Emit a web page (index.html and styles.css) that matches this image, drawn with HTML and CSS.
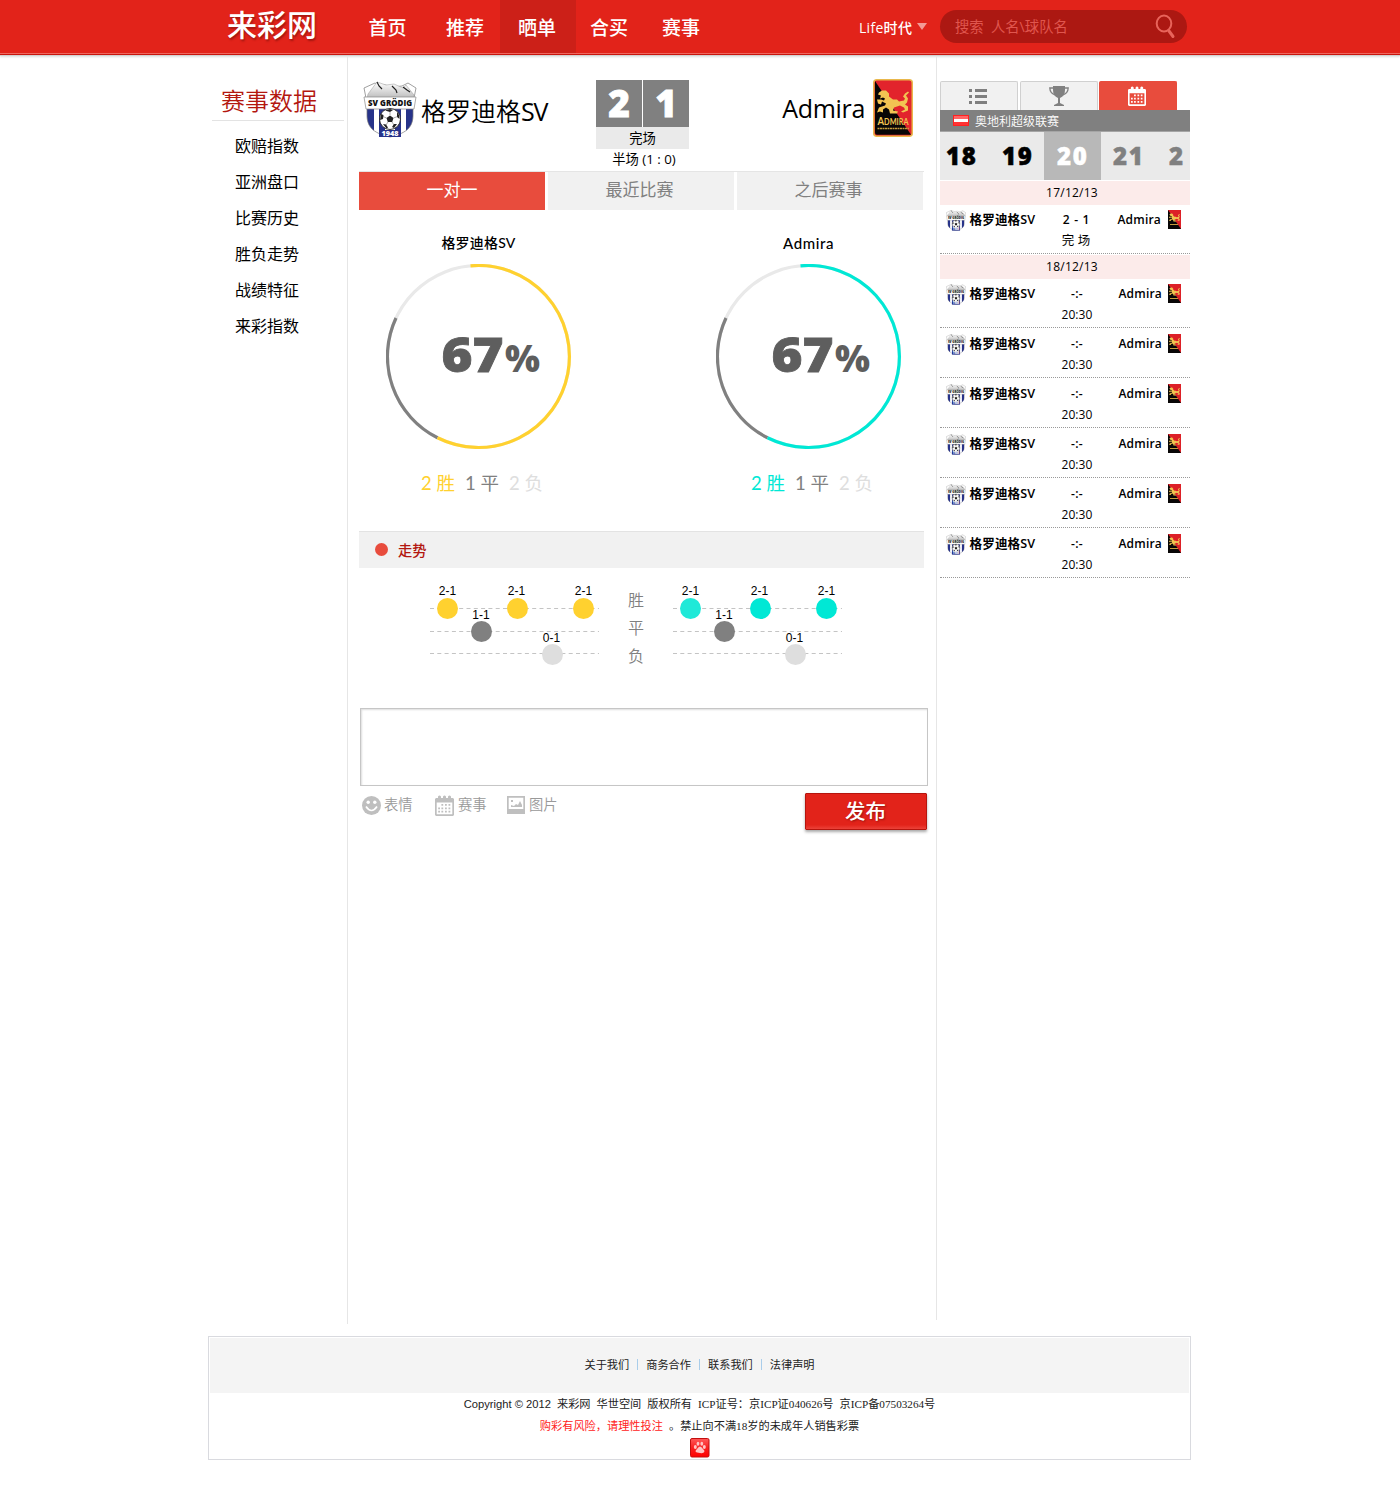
FILE: index.html
```html
<!DOCTYPE html>
<html lang="zh-CN">
<head>
<meta charset="utf-8">
<title>来彩网</title>
<link rel="stylesheet" href="styles.css">
</head>
<body>
<svg class="sprites" width="0" height="0" aria-hidden="true">
  <defs>
    <linearGradient id="rock" x1="0" y1="0" x2="0" y2="1"><stop offset="0" stop-color="#fff"/><stop offset="1" stop-color="#bdbdbd"/></linearGradient>
    <clipPath id="shield"><path d="M4 26H50V34C50 45 45 52 27 56C9 52 4 45 4 34Z"/></clipPath>
    <symbol id="crest-home" viewBox="0 0 54 57">
      <path d="M3 17L1 7L12 2L15 4L22 4L30 6L39 5L45 2L53 7L51 17Z" fill="#fff" stroke="#777" stroke-width=".7"/>
      <path d="M4 17L5 13L14 1L23 4L31 3L40 7L43 4L51 14L50 17Z" fill="url(#rock)" stroke="#999" stroke-width=".5"/>
      <path d="M14 1l2 4 3 3M29 5l4 4 1 3M40 6l4 3 3 2" fill="none" stroke="#222" stroke-width="1.200"/>
      <g clip-path="url(#shield)"><path d="M0 26H54V57H0Z" fill="#fff"/><path d="M4 26h7v31H4zM16 26h6v31h-6zM32 26h6v31h-6zM43 26h7v31h-7z" fill="#27338a"/></g>
      <path d="M4 26H50V34C50 45 45 52 27 56C9 52 4 45 4 34Z" fill="none" stroke="#777" stroke-width=".7"/>
      <path d="M1 16H53L51 28H3Z" fill="#fff" stroke="#888" stroke-width=".7"/>
      <text x="27" y="25" text-anchor="middle" textLength="44" lengthAdjust="spacingAndGlyphs" class="crest-word">SV GRÖDIG</text>
      <circle cx="27" cy="38" r="10.500" fill="#fff" stroke="#222" stroke-width=".9"/>
      <path d="M27 34.500l3.500 2.600-1.300 4h-4.400l-1.300-4zM22 29.500l5-1.500 3 1-3 2zM34 31l2 3 .5 4-2.500-2zM18 33l2.500 1-.5 4-3 1zM34 43l-3 4-2-1 2-3zM20 43l3 .5 2 3-1.500 1z" fill="#222"/>
      <path d="M27 34v-3M30.500 37l4-1.500M23.500 37l-3.500-1.500M29 41l2 3M25 41l-2 3" stroke="#555" stroke-width=".5"/>
      <path d="M16 49H38V56H16Z" fill="#27338a"/>
      <text x="27" y="55.300" text-anchor="middle" textLength="17" lengthAdjust="spacingAndGlyphs" class="crest-year">1948</text>
    </symbol>
    <symbol id="lion" viewBox="0 0 32 25">
      <path d="M2 3L5 1L9 1L12 4L12 7L16 10L20 10L22 12L27 11L28 9L26 7L28 4L31 2L32 3L29 6L31 9L30 13L28 15L31 17L31 21L26 23L24 22L28 20L27 18L23 16L17 18L16 21L21 22L20 24L13 24L12 20L9 18L6 20L6 23L3 22L0 23L2 18L8 16L9 14L5 12L4 15L1 14L0 10L4 10L7 11L8 9L6 8L3 9L4 6L1 5Z"/>
    </symbol>
    <symbol id="crest-away" viewBox="0 0 40 58">
      <rect x=".75" y=".75" width="38.500" height="56.500" rx="3" fill="#e2242c" stroke="#e9b84c" stroke-width="1.500"/>
      <path d="M2 2L38 55.800H4Q2 55.800 2 53Z" fill="#080606"/>
      <use href="#lion" x="4" y="10" width="32" height="26" fill="#f2c452"/>
      <text x="20" y="46" text-anchor="middle" textLength="31" lengthAdjust="spacingAndGlyphs" class="crest-admira">A<tspan class="crest-caps">DMIRA</tspan></text>
      <path d="M4.500 49.500H36" stroke="#c59c3c" stroke-width="1.500" stroke-dasharray="2 .5"/>
    </symbol>
    <symbol id="crest-away-small" viewBox="0 0 13 19">
      <path d="M0 0H13V19H0Z" fill="#dd2027"/><path d="M0 0L13 19H0Z" fill="#080606"/>
      <use href="#lion" x="1" y="3" width="11" height="9" fill="#f2c452"/><path d="M2 14.500h8" stroke="#c59c3c"/>
    </symbol>
    <symbol id="calendar" viewBox="0 0 19 21">
      <path fill-rule="evenodd" d="M1 3H3V1.500Q4.500-.5 6 1.500V3H8V1.500Q9.500-.5 11 1.500V3H13V1.500Q14.500-.5 16 1.500V3H18L19 4V20L18 21H1L0 20V4ZM1.700 7.500V19.300H17.300V7.500Z"/>
      <path d="M6.400 9h1.800v1.800h-1.800zM10 9h1.800v1.800h-1.800zM13.500 9h1.800v1.800h-1.800zM3.200 12.400h1.800v1.800h-1.800zM6.400 12.400h1.800v1.800h-1.800zM10 12.400h1.800v1.800h-1.800zM13.500 12.400h1.800v1.800h-1.800zM3.200 15.800h1.800v1.800h-1.800zM6.400 15.800h1.800v1.800h-1.800zM10 15.800h1.800v1.800h-1.800zM13.500 15.800h1.800v1.800h-1.800z"/>
    </symbol>
  </defs>
</svg>

<header class="topbar">
  <div class="topbar-inner">
    <a class="logo">来彩网</a>
    <nav class="nav">
      <a class="nav-home">首页</a><a class="nav-tips">推荐</a><a class="nav-show active">晒单</a><a class="nav-pool">合买</a><a class="nav-match">赛事</a>
    </nav>
    <a class="user">Life时代<i class="caret"></i></a>
    <div class="search"><span>搜索&nbsp; 人名\球队名</span>
      <svg width="21" height="26" viewBox="0 0 21 26"><ellipse cx="9" cy="10.500" rx="7.300" ry="8" fill="none" stroke="#e8645b" stroke-width="2"/><path d="M14 18l4 5.500" stroke="#e8645b" stroke-width="3" stroke-linecap="round"/></svg>
    </div>
  </div>
</header>

<div class="page">
  <aside class="side">
    <h2>赛事数据</h2>
    <ul><li>欧赔指数</li><li>亚洲盘口</li><li>比赛历史</li><li>胜负走势</li><li>战绩特征</li><li>来彩指数</li></ul>
  </aside>

  <main class="main">
    <section class="match">
      <svg class="crest-h" width="54" height="57"><use href="#crest-home"/></svg>
      <div class="team-h">格罗迪格<span>SV</span></div>
      <div class="score">
        <div class="goals"><b>2</b><b>1</b></div>
        <div class="state">完场</div>
        <div class="half">半场 (1 : 0)</div>
      </div>
      <div class="team-a">Admira</div>
      <svg class="crest-a" width="40" height="58"><use href="#crest-away"/></svg>
    </section>

    <div class="tabs"><a class="active">一对一</a><a>最近比赛</a><a>之后赛事</a></div>

    <section class="rings">
      <div class="ring home">
        <h3>格罗迪格SV</h3>
        <svg width="186" height="186" viewBox="-92.500 -92.500 186 186">
          <circle r="91" class="arc-lose"/>
          <path d="M-82.500-38.500A91 91 0 0 0-41 81.300" class="arc-draw"/>
          <path d="M-8-90.650A91 91 0 1 1-41 81.300" class="arc-win"/>
          <text x="-37" y="15" textLength="62" lengthAdjust="spacingAndGlyphs" class="pct">67</text>
          <text x="26.500" y="15.500" textLength="35" lengthAdjust="spacingAndGlyphs" class="pct-sign">%</text>
        </svg>
        <p><span class="win">2 胜</span><span class="draw">1 平</span><span class="lose">2 负</span></p>
      </div>
      <div class="ring away">
        <h3>Admira</h3>
        <svg width="186" height="186" viewBox="-92.500 -92.500 186 186">
          <circle r="91" class="arc-lose"/>
          <path d="M-82.500-38.500A91 91 0 0 0-41 81.300" class="arc-draw"/>
          <path d="M-8-90.650A91 91 0 1 1-41 81.300" class="arc-win"/>
          <text x="-37" y="15" textLength="62" lengthAdjust="spacingAndGlyphs" class="pct">67</text>
          <text x="26.500" y="15.500" textLength="35" lengthAdjust="spacingAndGlyphs" class="pct-sign">%</text>
        </svg>
        <p><span class="win">2 胜</span><span class="draw">1 平</span><span class="lose">2 负</span></p>
      </div>
    </section>

    <h2 class="bar"><i></i>走势</h2>
    <section class="trend">
      <svg class="chart home" width="170" height="88">
        <path class="grid" d="M0 28.500H169M0 51.500H169M0 73.500H169"/>
        <g class="win-dot"><circle cx="17.500" cy="28.500" r="10.500"/><circle cx="87.500" cy="28.500" r="10.500"/><circle cx="153.500" cy="28.500" r="10.500"/></g>
        <circle class="draw-dot" cx="51.500" cy="51.500" r="10.500"/><circle class="lose-dot" cx="122.500" cy="74.500" r="10.500"/>
        <text x="17.500" y="15">2-1</text><text x="86.500" y="15">2-1</text><text x="153.500" y="15">2-1</text><text x="51" y="39">1-1</text><text x="121.500" y="62">0-1</text>
      </svg>
      <div class="levels"><span>胜</span><span>平</span><span>负</span></div>
      <svg class="chart away" width="170" height="88">
        <path class="grid" d="M0 28.500H169M0 51.500H169M0 73.500H169"/>
        <g class="win-dot"><circle class="soft" cx="17.500" cy="28.500" r="10.500"/><circle cx="87.500" cy="28.500" r="10.500"/><circle cx="153.500" cy="28.500" r="10.500"/></g>
        <circle class="draw-dot" cx="51.500" cy="51.500" r="10.500"/><circle class="lose-dot" cx="122.500" cy="74.500" r="10.500"/>
        <text x="17.500" y="15">2-1</text><text x="86.500" y="15">2-1</text><text x="153.500" y="15">2-1</text><text x="51" y="39">1-1</text><text x="121.500" y="62">0-1</text>
      </svg>
    </section>

    <section class="post">
      <textarea></textarea>
      <div class="post-bar">
        <span class="tool face"><svg width="19" height="19"><circle cx="9.500" cy="9.500" r="9.500" fill="#bfbfbf"/><circle cx="6.200" cy="6.300" r="1.700" fill="#fff"/><circle cx="12.800" cy="6.300" r="1.700" fill="#fff"/><path d="M4 10.500q5.500 8 11 0" fill="none" stroke="#fff" stroke-width="1.700"/></svg>表情</span>
        <span class="tool game"><svg width="19" height="21" fill="#bfbfbf"><use href="#calendar"/></svg>赛事</span>
        <span class="tool pic"><svg width="18" height="18"><path fill="#bfbfbf" fill-rule="evenodd" d="M0 0H18V18H0ZM1.700 1.700V13H16.300V1.700ZM4 11V9l3 1 2-2 2 1 2-4 2 4v2zM4 4h2v2H4z"/></svg>图片</span>
        <button>发布</button>
      </div>
    </section>
  </main>

  <aside class="fixtures">
    <div class="icon-tabs">
      <a><svg width="18" height="15" fill="#7f7f7f"><path d="M0 0h3v3H0zM0 6h3v3H0zM0 12h3v3H0zM6 0h12v3H6zM6 6h12v3H6zM6 12h12v3H6z"/></svg></a>
      <a class="cup"><svg width="20" height="20" fill="#808080"><path d="M4 0H16V4Q16 10 11 12V17L15 19V20H5V19L9 17V12Q4 10 4 4Z"/><path d="M4 2H.8Q1 7 6 9M16 2h3.200Q19 7 14 9" fill="none" stroke="#808080" stroke-width="1.300"/></svg></a>
      <a class="active"><svg width="18" height="20" fill="#fff"><use href="#calendar"/></svg></a>
    </div>
    <div class="league"><i class="flag"></i>奥地利超级联赛</div>
    <div class="days"><b>18</b><b>19</b><b class="active">20</b><b class="next">21</b><b class="next cut">2</b></div>
    <h4>17/12/13</h4>
    <div class="row played"><svg class="ch" width="20" height="21"><use href="#crest-home"/></svg><b class="h">格罗迪格SV</b><b class="s">2 - 1</b><b class="a">Admira</b><svg class="ca" width="13" height="19"><use href="#crest-away-small"/></svg><span>完 场</span></div>
    <h4>18/12/13</h4>
    <div class="row"><svg class="ch" width="20" height="21"><use href="#crest-home"/></svg><b class="h">格罗迪格SV</b><b class="s">-:-</b><b class="a">Admira</b><svg class="ca" width="13" height="19"><use href="#crest-away-small"/></svg><span>20:30</span></div>
    <div class="row"><svg class="ch" width="20" height="21"><use href="#crest-home"/></svg><b class="h">格罗迪格SV</b><b class="s">-:-</b><b class="a">Admira</b><svg class="ca" width="13" height="19"><use href="#crest-away-small"/></svg><span>20:30</span></div>
    <div class="row"><svg class="ch" width="20" height="21"><use href="#crest-home"/></svg><b class="h">格罗迪格SV</b><b class="s">-:-</b><b class="a">Admira</b><svg class="ca" width="13" height="19"><use href="#crest-away-small"/></svg><span>20:30</span></div>
    <div class="row"><svg class="ch" width="20" height="21"><use href="#crest-home"/></svg><b class="h">格罗迪格SV</b><b class="s">-:-</b><b class="a">Admira</b><svg class="ca" width="13" height="19"><use href="#crest-away-small"/></svg><span>20:30</span></div>
    <div class="row"><svg class="ch" width="20" height="21"><use href="#crest-home"/></svg><b class="h">格罗迪格SV</b><b class="s">-:-</b><b class="a">Admira</b><svg class="ca" width="13" height="19"><use href="#crest-away-small"/></svg><span>20:30</span></div>
    <div class="row"><svg class="ch" width="20" height="21"><use href="#crest-home"/></svg><b class="h">格罗迪格SV</b><b class="s">-:-</b><b class="a">Admira</b><svg class="ca" width="13" height="19"><use href="#crest-away-small"/></svg><span>20:30</span></div>
  </aside>
</div>

<footer class="footer">
  <div class="links"><a>关于我们</a><i></i><a>商务合作</a><i></i><a>联系我们</a><i></i><a>法律声明</a></div>
  <p class="copy"><span class="en">Copyright © 2012</span><span>来彩网</span><span>华世空间</span><span>版权所有</span><span>ICP证号：京ICP证040626号</span><span>京ICP备07503264号</span></p>
  <p class="warn"><em>购彩有风险，请理性投注</em><span>。禁止向不满18岁的未成年人销售彩票</span></p>
  <svg class="paw" width="20" height="20"><defs><linearGradient id="pawbg" x1="0" y1="0" x2="0" y2="1"><stop offset="0" stop-color="#ff5a5a"/><stop offset=".5" stop-color="#fa2020"/><stop offset="1" stop-color="#f00"/></linearGradient></defs><rect x=".5" y=".5" width="18.500" height="18.500" rx="1.500" fill="url(#pawbg)" stroke="#c20f0f"/><g fill="#ffc4c4"><ellipse cx="5.300" cy="9" rx="1.500" ry="2"/><ellipse cx="8" cy="5.700" rx="1.400" ry="2"/><ellipse cx="11.800" cy="5.700" rx="1.400" ry="2"/><ellipse cx="14.300" cy="9" rx="1.500" ry="2"/><path d="M10 8.500q1.500 0 3 2.500 2 1.500 1.300 3-.8 1.500-4.300 1t-4.300-1q-.7-1.500 1.300-3 1.500-2.500 3-2.500"/></g></svg>
</footer>
</body>
</html>
```
FILE: styles.css
```css
* { box-sizing: border-box; }
body { margin: 0; background: #fff; color: #000; font-family: "Open Sans", "Noto Sans CJK SC", sans-serif; }
h2, h3, h4, p, ul { margin: 0; padding: 0; font-weight: 400; }
ul { list-style: none; }
i, em { font-style: normal; }
svg { display: block; flex: none; }
.sprites { position: absolute; }

/* top bar */
.topbar { height: 56px; background: linear-gradient(#e2231a 0 53px, #f0675f 53px 54px, #c9150d 54px 55px, #d2d2d2 55px); box-shadow: 0 1px 2px #ddd; }
.topbar-inner { display: flex; width: 984px; margin-left: 208px; height: 53px; color: #fff; }
.logo { width: 140px; padding-left: 19px; font-size: 30px; font-weight: 500; line-height: 50px; text-shadow: 1px 2px 2px #a31710; }
.nav { display: flex; width: 470px; font-size: 19px; font-weight: 500; line-height: 56px; text-align: center; }
.nav a { flex: none; }
.nav-home { width: 79px; }
.nav-tips { width: 70px; margin-left: 3px; }
.nav-show { width: 76px; padding-right: 2px; }
.nav-pool { width: 66px; }
.nav-match { width: 78px; }
.nav .active { height: 53px; background: #cc2018; }
.user { display: flex; flex: none; align-items: center; width: 122px; padding-left: 41px; font-size: 14px; font-weight: 500; letter-spacing: .3px; white-space: nowrap; }
.caret { margin-left: 5px; border: 5px solid transparent; border-top: 7px solid #f39a95; border-bottom: 0; }
.search { display: flex; flex: none; justify-content: space-between; width: 247px; height: 33px; margin-top: 10px; padding: 3px 11px 0 15px; border-radius: 17px; background: #ac1812; color: #e0564e; font-size: 14.3px; line-height: 28px; }

.page { display: flex; height: 1268px; margin-left: 208px; }

/* sidebar */
.side { width: 140px; border-right: 1px solid #e6e6e6; }
.side h2 { width: 132px; height: 40px; margin: 25px 0 7px 4px; padding-left: 9px; border-bottom: 1px solid #e3e3e3; color: #b3170f; font-size: 24px; font-weight: 350; line-height: 39px; }
.side li { padding-left: 27px; font-size: 16px; line-height: 36px; }

/* match header */
.main { width: 589px; height: 1264px; padding-left: 11px; border-right: 1px solid #e6e6e6; }
.match { display: flex; width: 565px; height: 116px; border-bottom: 1px solid #e5e5e5; }
.crest-h { margin: 25px 4px 0; }
.team-h { width: 175px; padding-top: 38px; font-size: 25px; font-weight: 350; line-height: 34px; white-space: nowrap; }
.team-h span { font-weight: 400; letter-spacing: -1.2px; }
.score { width: 93px; padding-top: 24px; font-size: 13.3px; text-align: center; white-space: nowrap; }
.goals { display: flex; gap: 1px; height: 47px; color: #fff; font: 800 37px/45px "Open Sans", sans-serif; }
.goals b { flex: 1; background: #808080; font-weight: 800; -webkit-text-stroke: .8px; }
.state { height: 22px; background: #eaeaea; line-height: 22px; }
.half { padding-left: 3px; line-height: 20px; }
.team-a { width: 184px; padding: 35px 8px 0 0; font-size: 25px; line-height: 34px; letter-spacing: -.3px; text-align: right; }
.crest-a { margin-top: 23px; }
.crest-word { font: 800 8px "Open Sans", sans-serif; fill: #111; }
.crest-year { font: 800 7px "Open Sans", sans-serif; fill: #fff; }
.crest-admira { font: 700 11px Lato, sans-serif; fill: #f2c452; }
.crest-caps { font-size: 8.5px; }

.tabs { display: flex; gap: 3px; width: 564px; }
.tabs a { flex: none; width: 186px; height: 38px; padding-right: 3px; background: #f1f1f1; color: #808080; font-size: 17px; line-height: 36px; text-align: center; }
.tabs .active { padding: 0; background: #e84c3d; color: #fff; }

/* win rate rings */
.rings { display: flex; gap: 91px; width: 569px; height: 321px; }
.ring { width: 239px; flex: none; padding-top: 21.5px; --c: #ffd12f; }
.away { --c: #00e8d5; }
.ring h3 { height: 32px; font: 500 14px/22px Lato, "Noto Sans CJK SC", sans-serif; text-align: center; letter-spacing: .2px; }
.ring.away h3 { font-size: 15px; letter-spacing: .6px; }
.ring svg { margin: 0 auto 0 26.5px; }
.arc-lose, .arc-draw, .arc-win { fill: none; stroke-width: 3.2; stroke: #e9e9e9; }
.arc-draw { stroke: #808080; }
.arc-win { stroke: var(--c); }
.pct, .pct-sign { font: 800 48px "Open Sans", sans-serif; fill: #5e5e5e; stroke: #5e5e5e; stroke-width: .8; }
.pct-sign { font-size: 37px; stroke-width: 0; }
.ring p { display: flex; gap: 11px; padding: 21px 0 0 62px; font: 18.5px/24px Lato, "Noto Sans CJK SC", sans-serif; white-space: nowrap; }
.ring p span { width: 33px; }
.win { color: var(--c); }
.draw { color: #808080; }
.lose { color: #dedede; }

/* trend */
.bar { display: flex; align-items: center; width: 565px; height: 37px; padding: 0 0 1px 16px; border-top: 1px solid #e3e3e3; background: #f1f1f1; color: #b3170f; font-size: 14.3px; font-weight: 500; }
.bar i { width: 13px; height: 13px; margin-right: 10px; border-radius: 50%; background: #e84c3d; }
.trend { display: flex; height: 140px; padding: 12px 0 0 71px; }
.chart.home { --c: #ffd12f; }
.chart text { font: 12px "Liberation Sans", sans-serif; text-anchor: middle; }
.grid { stroke: #c4c4c4; stroke-width: 1; stroke-dasharray: 4 3.3; }
.win-dot { fill: var(--c); }
.soft { fill: #1fe9d8; }
.draw-dot { fill: #808080; }
.lose-dot { fill: #dedede; }
.levels { width: 73px; padding: 6px 0 0 28px; color: #808080; font-size: 16px; font-weight: 350; line-height: 28px; }
.levels span { display: block; }

/* post box */
.post { width: 568px; margin-left: 1px; }
.post textarea { display: block; width: 568px; height: 78px; resize: none; border: 1px solid #c6c6c6; outline: 0; box-shadow: inset 1px 1px 2px #ddd; }
.post-bar { display: flex; align-items: flex-start; padding-left: 2px; color: #999; font-size: 14.3px; font-weight: 350; line-height: 38px; }
.tool { display: flex; align-items: center; gap: 4px; }
.face { width: 73px; gap: 3px; }
.game { width: 72px; gap: 4px; }
.post button { width: 122px; height: 37px; margin: 7px 1px 0 auto; padding: 0 1px 3px 0; border: 1px solid #b5150e; border-radius: 1px; background: linear-gradient(#e2231a 88%, #ec4239); box-shadow: 0 2px 3px #aaa; color: #fff; font: 500 20.5px/32px "Noto Sans CJK SC", sans-serif; text-shadow: 1px 1px 2px #9b140e; }

/* fixtures */
.fixtures { width: 250px; margin-left: 3px; font-size: 12px; }
.icon-tabs { display: flex; gap: 1.5px; padding-top: 25px; }
.icon-tabs a { display: flex; align-items: center; justify-content: center; width: 78px; height: 29px; padding-right: 2px; border: 1px solid #d0d0d0; border-bottom: 0; border-radius: 2px 2px 0 0; background: #f1f1f1; }
.icon-tabs .cup { padding-right: 0; }
.icon-tabs .active { border-color: #e84c3d; background: #e84c3d; }
.league { display: flex; align-items: center; gap: 6px; height: 22px; padding-left: 13px; background: #808080; border-bottom: 1px solid #a5a5a5; color: #fff; font-weight: 350; }
.flag { width: 16px; height: 11px; border: 1px solid #f22; background: linear-gradient(#f66 3px, #fff 3px 6px, #f33 6px); }
.days { display: flex; height: 48px; background: #eaeaea; font: 800 24px/47px "Open Sans", sans-serif; overflow: hidden; }
.days b { flex: none; width: 56px; height: 48px; padding-left: 6px; font-weight: 800; letter-spacing: 1.6px; -webkit-text-stroke: .5px; }
.days .active { width: 57px; margin-left: -8px; padding-left: 13px; background: #b8b8b8; color: #fff; }
.days .next { color: #808080; padding-left: 12px; }
.days .cut { width: 33px; }
.fixtures h4 { height: 24px; padding-left: 14px; background: #fcebea; font-size: 12px; line-height: 23px; letter-spacing: .25px; text-align: center; }
.days + h4 { margin-top: 1px; }
.row { display: grid; grid-template: 26px 22px / 29px 74px 68px 51px 28px; height: 49px; margin-bottom: 1px; border-bottom: 1px dotted #999; white-space: nowrap; }
.row b { font-weight: 600; line-height: 29px; }
.row .h { padding-left: .5px; font-size: 12.6px; letter-spacing: .1px; }
.row .ch { margin: 5px 0 0 6px; }
.row .s { text-align: center; letter-spacing: .4px; }
.row .a { text-align: right; letter-spacing: .2px; }
.row .ca { margin: 5px 0 0 6px; }
.row.played .a { padding-right: 1px; }
.row.played .s { padding-right: 1px; letter-spacing: .7px; }
.row.played span { font-size: 12.5px; padding-right: 2px; }
.row span { grid-area: 2 / 3; line-height: 20px; text-align: center; letter-spacing: .1px; }

/* footer */
.footer { width: 983px; height: 124px; margin: 12px 0 0 208px; padding: 1px; border: 1px solid #d9dadf; font: 11.2px "Liberation Serif", "Noto Sans CJK SC", serif; color: #222; }
.links { display: flex; justify-content: center; align-items: center; height: 55px; padding-bottom: 3px; background: #f4f4f4; }
.links i { width: 1px; height: 11px; margin: 0 8px; background: #a9cdea; }
.copy, .warn { display: flex; justify-content: center; gap: 6px; line-height: 22px; white-space: nowrap; }
.en { font-family: "Liberation Sans", sans-serif; }
.warn em { color: #f22; }
.paw { margin: 1px auto 0; }
```
